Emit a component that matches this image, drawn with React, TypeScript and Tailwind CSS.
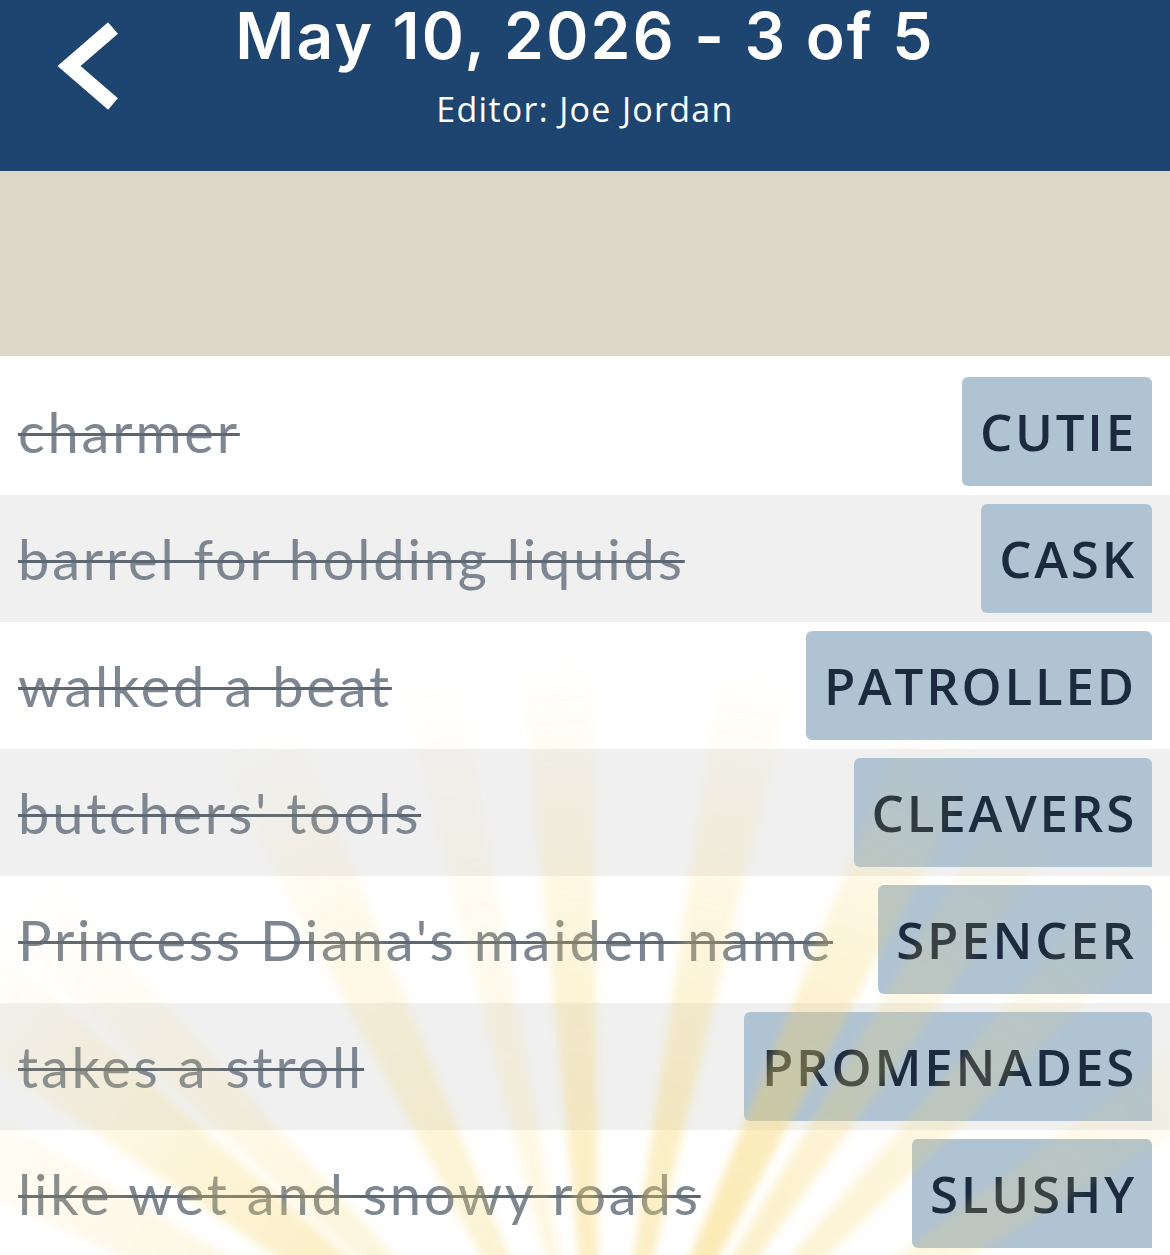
type Clue = { clue: string; answer: string }

const CLUES: Clue[] = [
  { clue: 'charmer', answer: 'CUTIE' },
  { clue: 'barrel for holding liquids', answer: 'CASK' },
  { clue: 'walked a beat', answer: 'PATROLLED' },
  { clue: "butchers' tools", answer: 'CLEAVERS' },
  { clue: "Princess Diana's maiden name", answer: 'SPENCER' },
  { clue: 'takes a stroll', answer: 'PROMENADES' },
  { clue: 'like wet and snowy roads', answer: 'SLUSHY' },
]

// angle from vertical (deg), half width (deg), strength
const RAYS: [number, number, number][] = [
  [-62, 3, 0.5],
  [-52, 3.5, 0.8],
  [-45, 2.5, 0.5],
  [-25, 3, 0.6],
  [-12, 2, 0.4],
  [-3, 2.5, 0.8],
  [11, 2.5, 0.8],
  [25, 3, 1],
  [33, 2.5, 0.7],
  [43, 2.5, 0.6],
  [56, 3, 0.5],
]

function Sunburst() {
  const cx = 600
  const cy = 1480
  const r = 1400
  return (
    <svg
      className="pointer-events-none absolute inset-0"
      width="1170"
      height="1255"
      viewBox="0 0 1170 1255"
    >
      <defs>
        <radialGradient id="fade" gradientUnits="userSpaceOnUse" cx={cx} cy={cy} r="820">
          <stop offset="0" stopColor="#f6d15f" stopOpacity="0.9" />
          <stop offset="0.45" stopColor="#f6d15f" stopOpacity="0.7" />
          <stop offset="0.75" stopColor="#f6d15f" stopOpacity="0.35" />
          <stop offset="1" stopColor="#f6d15f" stopOpacity="0" />
        </radialGradient>
        <filter id="soft" x="-20%" y="-20%" width="140%" height="140%">
          <feGaussianBlur stdDeviation="5" />
        </filter>
      </defs>
      <g filter="url(#soft)">
        {RAYS.map(([a, w, s], i) => {
          const a1 = ((a - w) * Math.PI) / 180
          const a2 = ((a + w) * Math.PI) / 180
          const p1 = `${cx + r * Math.sin(a1)},${cy - r * Math.cos(a1)}`
          const p2 = `${cx + r * Math.sin(a2)},${cy - r * Math.cos(a2)}`
          return <polygon key={i} points={`${cx},${cy} ${p1} ${p2}`} fill="url(#fade)" opacity={s * 0.6} />
        })}
      </g>
    </svg>
  )
}

function ClueRow({ item, shaded }: { item: Clue; shaded: boolean }) {
  return (
    <div
      className={`flex h-[127px] items-center justify-between gap-4 py-[9px] pl-[18px] pr-[18px] ${
        shaded ? 'bg-[#f0f0f0]' : 'bg-white'
      }`}
    >
      <span className="whitespace-nowrap font-['Lato',sans-serif] text-[56px] leading-none tracking-[2.8px] text-[#7e8791] line-through decoration-[#5d6772] decoration-[3px]">
        {item.clue}
      </span>
      <div className="flex h-full items-center rounded-md rounded-br-none bg-[#b0c3d3] pl-[18px] pr-[15px]">
        <span className="font-['Open_Sans',sans-serif] text-[51px] font-semibold leading-none tracking-[2.8px] text-[#1b2a3e]">
          {item.answer}
        </span>
      </div>
    </div>
  )
}

export default function App() {
  return (
    <div className="relative min-h-[1255px] w-[1170px] overflow-hidden bg-white">
      {/* Header */}
      <header className="relative flex h-[171px] flex-col items-center bg-[#1e4570] text-white">
        <svg className="absolute left-[55px] top-[18px]" width="70" height="96" viewBox="0 0 70 96">
          <polyline
            points="58,10 14,48 58,86"
            fill="none"
            stroke="white"
            strokeWidth="15"
            strokeLinejoin="miter"
            strokeLinecap="butt"
          />
        </svg>
        <h1 className="mt-[4px] font-['Inter',sans-serif] text-[64px] font-semibold leading-none tracking-[2.2px]">
          May 10, 2026 - 3 of 5
        </h1>
        <p className="mt-[21px] font-['Open_Sans',sans-serif] text-[34px] leading-[40px] tracking-[1.3px]">
          Editor: Joe Jordan
        </p>
      </header>

      {/* Banner area */}
      <div className="h-[185px] bg-[#ddd7ca]" />

      {/* Clue list */}
      <div className="pt-[12px]">
        {CLUES.map((c, i) => (
          <ClueRow key={c.answer} item={c} shaded={i % 2 === 1} />
        ))}
      </div>

      <Sunburst />
    </div>
  )
}
